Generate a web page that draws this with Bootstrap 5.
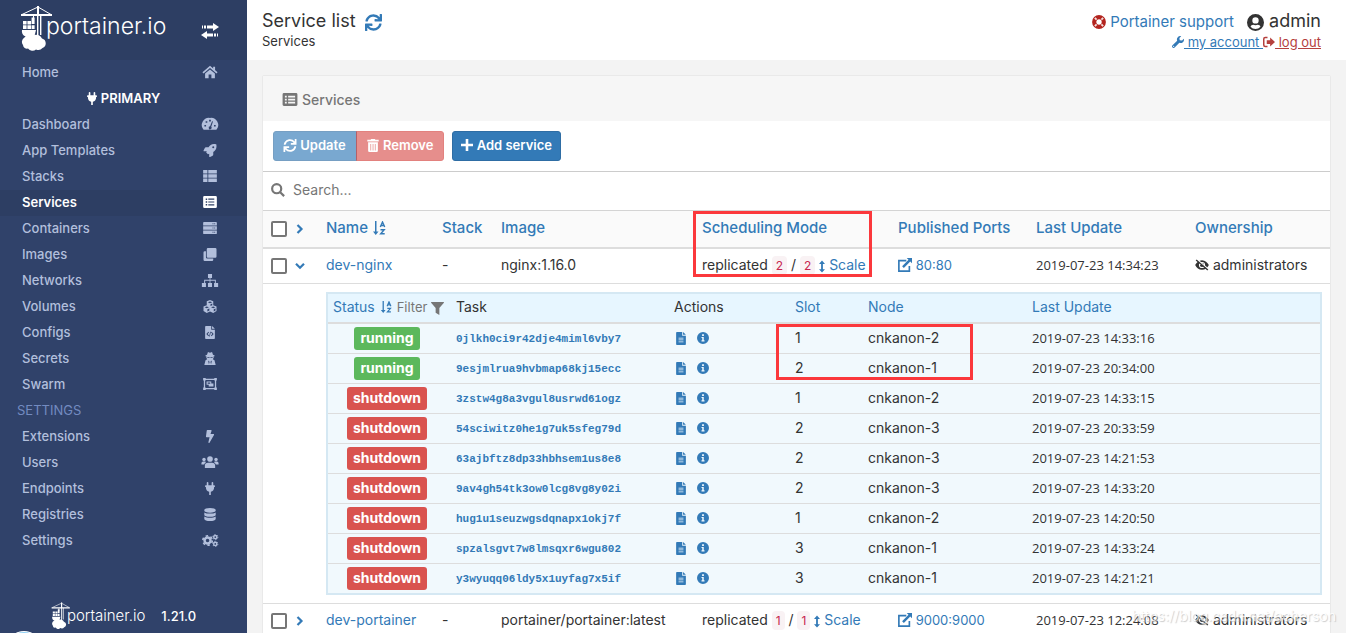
<!DOCTYPE html>
<html lang="en">
<head>
<meta charset="utf-8">
<meta name="viewport" content="width=device-width, initial-scale=1">
<title>Portainer</title>
<link href="https://cdn.jsdelivr.net/npm/bootstrap@5.3.0/dist/css/bootstrap.min.css" rel="stylesheet">
<style>
body{font-family:Inter,"Open Sans",sans-serif;font-size:13px;line-height:18px;color:#333;background:#f3f3f3}
a{color:#337ab7;text-decoration:none}
svg{fill:currentColor;flex:none}
.ico{width:14px;height:14px;vertical-align:-2px}
.ico-sm{width:12px;height:12px;vertical-align:-1px}
.sidebar{width:247px;background:#30426a;color:#b2bfdc}
.brand-bar{height:60px;background:#2d3e63;color:#fff;padding:0 28px 4px 20px}
.logo-text{font-size:23px;line-height:28px;font-weight:300;color:#fff;margin-left:-8px;padding-bottom:4px}
.swap{margin-top:5px}
.logo-sm{font-size:15px;line-height:20px;font-weight:300;color:#fff;margin-left:-4px}
.side-link{height:26px;padding:0 27px 2px 22px;color:#b2bfdc;font-weight:500}
.side-link.active{background:#2d3e63;color:#fff;font-weight:600}
.side-link svg{width:20px;height:14px}
.side-head{height:26px;padding-bottom:2px;font-weight:600;color:#fff}
.side-set{height:26px;padding:0 0 2px 17px;color:#738bc0}
.chat{position:absolute;left:5px;bottom:-36px;width:38px;height:38px;border-radius:50%;background:#8fd0f5;border:1px solid #fff}
.topbar{height:60px;background:#fff;padding:10px 25px 0 15px}
.page-title{font-size:18px;line-height:22px}
.support{font-size:15px}
.text-out{color:#b5403d}
.panel-box{margin:15px 15px 0;background:#fff;border:1px solid #e9e9e9;border-radius:2px}
.panel-head{height:45px;background:#f6f6f6;color:#767676;font-size:14px;font-weight:500;padding:2px 19px 0}
.actions{height:51px;padding:0 10px;border-bottom:1px solid #ccc}
.btn{height:30px;font-size:13px;line-height:18px;font-weight:600;padding:0 9px 2px;border-radius:3px;color:#fff}
.btn-upd{background:#337ab7;border-color:#2e6da4}
.btn-add{padding:0 8px 2px}
.btn:disabled{opacity:.65;color:#fff;background:#337ab7;border-color:#2e6da4}
.btn-group .btn{padding:0 10px 2px 9px}
.btn-del:disabled{background:#d9534f;border-color:#d43f3a}
.search{height:39px;padding:0 8px 2px;border-bottom:1px solid #d4d4d4;color:#767676}
.search input{border:0;outline:0;font-size:14px;color:#333;background:none}
.search input::placeholder{color:#767676;opacity:1}
.grid{width:100%;table-layout:fixed;border-collapse:separate;border-spacing:0;white-space:nowrap}
.grid>thead>tr>th{height:38px;padding:0 8px 2px;background:#fafafa;border-bottom:2px solid #ddd;font-size:15px;font-weight:500}
.grid>tbody>tr>td{height:35px;padding:0 8px 2px;border-bottom:1px solid #ddd;font-size:14px}
.grid>tbody>tr>.sub{padding:8px}
.grid>tbody>tr>.ports{font-size:13px}
.c1{width:55px}.c2{width:116px}.c3{width:59px}.c4{width:201px}.c5{width:196px}.c6{width:138px}.c7{width:159px}.c8{width:143px}
.tick{appearance:none;width:16px;height:16px;border:2px solid #767676;border-radius:2px;background:#fff;margin:0;vertical-align:-4px}
.chev{width:10px;height:10px;margin-left:8px;color:#337ab7;vertical-align:-1px}
.num{font-size:12px;line-height:14px;color:#c7254e;background:#f9f2f4;border-radius:4px;padding:2px 4px}
.grid .stamp{font-family:"Open Sans",sans-serif;font-size:13px}
.tasks{width:100%;table-layout:fixed;border-collapse:separate;border-spacing:0;border:2px solid #d5e8f3;background:#f1f9fd}
.tasks th{height:30px;padding:0 5px 2px;background:#e7f6ff;border-bottom:2px solid #ddd;font-size:14px;font-weight:400}
.tasks td{height:30px;padding:0 5px 2px;border-bottom:1px solid #ddd}
.tasks tr:last-child td{border-bottom:0;height:29px}
.tasks td:first-child{text-align:center;padding:0 10px 0 5px}
.d1{width:123px}.d2{width:218px}.d3{width:121px}.d4{width:73px}.d5{width:164px}.d6{width:293px}
.filter{font-size:13px;color:#767676}
.state{display:inline-block;height:23px;padding:0 6px;line-height:21px;font-size:14px;font-weight:700;color:#fff;border-radius:3px;background:#d9534f}
.state.ok{background:#5cb85c}
.tid{font-family:"Liberation Mono",monospace;font-size:11px;font-weight:700}
.frame{position:absolute;border:3px solid #fb383c;pointer-events:none}
.frame-a{left:-1px;top:0;width:179px;height:66px}
.frame-b{left:-14px;top:0;width:197px;height:56px}
.mark-url{position:absolute;right:10px;bottom:6px;font-size:14px;line-height:22px;color:#fff;text-shadow:1px 1px 1px #bbb;opacity:.75;pointer-events:none}
</style>
</head>
<body>
<svg width="0" height="0" class="position-absolute">
<symbol id="sync" viewBox="0 0 512 512"><path d="M440.65 12.57l4 82.77A247.16 247.16 0 0 0 255.83 8C134.73 8 33.91 94.92 12.29 209.82A12 12 0 0 0 24.09 224h49.05a12 12 0 0 0 11.67-9.26 175.91 175.91 0 0 1 317-56.94l-101.46-4.86a12 12 0 0 0-12.57 12v47.41a12 12 0 0 0 12 12H500a12 12 0 0 0 12-12V12a12 12 0 0 0-12-12h-47.37a12 12 0 0 0-11.98 12.57zM255.83 432a175.61 175.61 0 0 1-146-77.8l101.8 4.87a12 12 0 0 0 12.57-12v-47.4a12 12 0 0 0-12-12H12a12 12 0 0 0-12 12V500a12 12 0 0 0 12 12h47.35a12 12 0 0 0 12-12.6l-4.15-82.57A247.17 247.17 0 0 0 255.83 504c121.11 0 221.93-86.92 243.55-201.82a12 12 0 0 0-11.8-14.18h-49.05a12 12 0 0 0-11.67 9.26A175.86 175.86 0 0 1 255.83 432z"/></symbol>
<symbol id="crane" viewBox="0 0 34 46"><path d="M17 1h2v8h-2zM1 9h31v2H1zM17 10h1.400v22H17zM20 10h1.400v20H20zM13 10h1v5h-1z"/><path d="M18 2L2 9.500M18 2l13 7.500" fill="none" stroke="currentColor"/><path d="M3 16h3.600v3.500H3zM7.400 16H11v3.500H7.400zM11.600 12.500h3V19h-3zM3 20.300h3.600V24H3zM7.400 20.300H11V24H7.400zM11.600 20.300h3V24h-3z"/><path d="M2 25h14l-1.500 6H4.500C2.500 30 1.500 27.500 2 25z"/><path d="M3 40a5 5 0 0 1 1.500-7.500 5.500 5.500 0 0 1 8.500-2 6.500 6.500 0 0 1 9 3 5 5 0 0 1 .5 9.500 5.500 5.500 0 0 1-6.500 1.500 5.500 5.500 0 0 1-8-1A4 4 0 0 1 3 40z"/></symbol>
<symbol id="home" viewBox="0 0 18 16"><path d="M1 9l8-7 8 7" fill="none" stroke="currentColor" stroke-width="1.900"/><path d="M12.600 2h2.200v5l-2.200-2zM3.400 9.800L9 5l5.600 4.800V15h-4v-4.200H7.400V15h-4z"/></symbol>
<symbol id="dash" viewBox="0 0 18 16"><path fill-rule="evenodd" d="M9 1a8.200 8.200 0 0 0-7.300 13.500h14.600A8.200 8.200 0 0 0 9 1zM8 3.200h2v1.900H8zM4 4.800h1.900v1.900H4zM2.600 9h1.900v1.900H2.600zM13.600 9h1.900v1.900h-1.900zM11.400 4.800l1 .3-2 6a1.700 1.700 0 1 1-1.300-.5z"/></symbol>
<symbol id="rocket" viewBox="0 0 512 512"><path fill-rule="evenodd" d="M505 19c-1-5-7-11-12-12C461 0 435 0 410 0 307 0 245 55 199 128H95c-18 0-35 10-43 26L3 253c-8 16 3 35 21 35h104l-22 50 70 70 48-22v102c0 18 19 29 35 21l98-49c17-8 27-25 27-43V313c73-46 128-108 128-211 0-25 0-50-7-83zM384 168a40 40 0 1 1 0-80 40 40 0 0 1 0 80z"/></symbol>
<symbol id="thlist" viewBox="0 0 16 14"><path d="M0 0h5v4H0zM6 0h10v4H6zM0 5h5v4H0zM6 5h10v4H6zM0 10h5v4H0zM6 10h10v4H6z"/></symbol>
<symbol id="listalt" viewBox="0 0 16 14"><path fill-rule="evenodd" d="M1.500 0h13A1.500 1.500 0 0 1 16 1.500v11a1.500 1.500 0 0 1-1.500 1.500h-13A1.500 1.500 0 0 1 0 12.500v-11A1.500 1.500 0 0 1 1.500 0zM3 3v1.600h1.700V3zM6 3v1.400h7V3zM3 6.200v1.600h1.700V6.200zM6 6.300v1.400h7V6.300zM3 9.400V11h1.700V9.400zM6 9.600V11h7V9.600z"/></symbol>
<symbol id="table" viewBox="0 0 16 14"><path fill-rule="evenodd" d="M1.500 0h13A1.500 1.500 0 0 1 16 1.500v11a1.500 1.500 0 0 1-1.500 1.500h-13A1.500 1.500 0 0 1 0 12.500v-11A1.500 1.500 0 0 1 1.500 0zM2.500 3v1.800h2V3zM6 3v1.800h7.500V3zM2.500 6.200V8h2V6.200zM6 6.200V8h7.500V6.200zM2.500 9.400v1.800h2V9.400zM6 9.400v1.800h7.500V9.400z"/></symbol>
<symbol id="server" viewBox="0 0 16 14"><path fill-rule="evenodd" d="M1 0h14a1 1 0 0 1 1 1v3H0V1a1 1 0 0 1 1-1zM11 1.500v1h1v-1zM13 1.500v1h1v-1zM0 5h16v4H0zM11 6.500v1h1v-1zM13 6.500v1h1v-1zM0 10h16v3a1 1 0 0 1-1 1H1a1 1 0 0 1-1-1zM11 11.500v1h1v-1zM13 11.500v1h1v-1z"/></symbol>
<symbol id="clone" viewBox="0 0 16 16"><path d="M5.500 0h9A1.500 1.500 0 0 1 16 1.500v9a1.500 1.500 0 0 1-1.500 1.500h-9A1.500 1.500 0 0 1 4 10.500v-9A1.500 1.500 0 0 1 5.500 0zM3 4v7.500A1.500 1.500 0 0 0 4.500 13H12v1.500a1.500 1.500 0 0 1-1.500 1.500h-9A1.500 1.500 0 0 1 0 14.500v-9A1.500 1.500 0 0 1 1.500 4z"/></symbol>
<symbol id="sitemap" viewBox="0 0 20 16"><path d="M7.500 0h5v5h-2v2h6.700v4H20v5h-5v-5h1V8.300h-5.500V11h2v5h-5v-5h2V8.300H4V11h1v5H0v-5h2.800V7h6.700V5h-2z"/></symbol>
<symbol id="cubes" viewBox="0 0 18 16"><path fill-rule="evenodd" d="M9 0l4 1.600v4.800L17 8v5.500L13 16l-4-1.800L5 16l-4-2.500V8l4-1.600V1.600zM6.300 2.800L9 4l2.700-1.200L9 1.700zM2.400 9l2.600 1.200L7.700 9 5 7.900zM10.300 9l2.700 1.200L15.600 9 13 7.900zM5.800 11.500v2.600l2.400-1.300v-2.400zM13.600 11.500v2.600l2.200-1.300v-2.400zM9.600 5.200v2.200l2.200-.9V4.200z"/></symbol>
<symbol id="filecode" viewBox="0 0 12 16"><path fill-rule="evenodd" d="M1 0h6.500v4.500H12V15a1 1 0 0 1-1 1H1a1 1 0 0 1-1-1V1a1 1 0 0 1 1-1zM8.500 0L12 3.500H8.500zM4 7L1.500 9.800 4 12.500l.8-.8L3.100 9.800l1.700-2zM8 7l-.8.8 1.700 2-1.700 1.900.8.800 2.500-2.700zM6.200 7l-1.300 6h.9l1.300-6z"/></symbol>
<symbol id="secret" viewBox="0 0 14 16"><path fill-rule="evenodd" d="M4.500 0L7 .8 9.500 0l1.200 3.500 2 .8v1H11.500v1.800L10.500 9l2 1.200L14 16H0l1.500-5.800 2-1.200-1-1.900V5.300H1.300v-1l2-.8zM3.700 6v1h2.800V6zM7.500 6v1h2.800V6zM4.600 10.500L5.700 15l.8-3zM9.400 10.500L7.500 12l.8 3z"/></symbol>
<symbol id="group" viewBox="0 0 16 14"><path fill-rule="evenodd" d="M0 0h3v.8h10V0h3v3h-.8v8h.8v3h-3v-.8H3v.8H0v-3h.8V3H0zM3 2.300v.7h-.7v8H3v.7h10V11h.7V3H13v-.7zM4 4h5.500v2.300H12V10H6.500V8H4zM5.300 5.200v1.600h3V5.200z"/></symbol>
<symbol id="bolt" viewBox="0 0 320 512"><path d="M296 160H180.600l42.600-129.800C227.200 15 215.700 0 200 0H56C44 0 33.800 8.900 32.200 20.800l-32 240C-1.700 275.200 9.500 288 24 288h118.700L96.600 482.500c-3.600 15.200 8 29.500 23.300 29.500 8.400 0 16.400-4.400 20.800-12l176-304c9.300-15.900-2.200-36-20.700-36z"/></symbol>
<symbol id="users" viewBox="0 0 20 14"><circle cx="10" cy="3.500" r="3.300"/><circle cx="3" cy="4" r="2"/><circle cx="17" cy="4" r="2"/><path d="M4 14v-2.500A3.700 3.700 0 0 1 7.700 7.800h4.600a3.700 3.700 0 0 1 3.700 3.700V14zM0 10V8.500a2 2 0 0 1 2-2h2.500l.8.700A5 5 0 0 0 3.200 10zM20 10V8.500a2 2 0 0 0-2-2h-2.500l-.8.700a5 5 0 0 1 2.100 2.800z"/></symbol>
<symbol id="plug" viewBox="0 0 12 16"><path d="M2 1a1 1 0 0 1 2 0v3h4V1a1 1 0 0 1 2 0v3h1.500a.5.5 0 0 1 .5.500V6h-1v1.500A5 5 0 0 1 7 12v4H5v-4a5 5 0 0 1-4-4.500V6H0V4.500A.5.5 0 0 1 .5 4H2z"/></symbol>
<symbol id="db" viewBox="0 0 14 16"><path d="M0 2.300C0 1 3 0 7 0s7 1 7 2.300v1.200C14 4.800 11 5.700 7 5.700S0 4.800 0 3.500zM0 5.500c1.500 1.100 4 1.400 7 1.400s5.500-.3 7-1.400v3c0 1.300-3 2.300-7 2.300S0 9.800 0 8.500zM0 10.500c1.500 1.200 4 1.500 7 1.500s5.500-.3 7-1.500v3c0 1.500-3 2.500-7 2.500S0 15 0 13.500z"/></symbol>
<symbol id="cogs" viewBox="0 0 20 16"><g fill="none" stroke="currentColor"><circle cx="7" cy="8" r="3.700" stroke-width="3"/><circle cx="7" cy="8" r="5.800" stroke-width="2" stroke-dasharray="3 3.070"/><circle cx="16.500" cy="3.800" r="2" stroke-width="1.800"/><circle cx="16.500" cy="12.200" r="2" stroke-width="1.800"/><circle cx="16.500" cy="3.800" r="3.200" stroke-dasharray="1.700 1.650"/><circle cx="16.500" cy="12.200" r="3.200" stroke-dasharray="1.700 1.650"/></g></symbol>
<symbol id="swap" viewBox="0 0 18 16"><path d="M1 2.500h1v3H1zM3 2.500h2v3H3zM6 2.500h6V0l6 4-6 4V5.500H6zM17 10.500h-1v3h1zM15 10.500h-2v3h2zM12 10.500H6V8l-6 4 6 4v-2.500h6z"/></symbol>
<symbol id="ring" viewBox="0 0 16 16"><circle cx="8" cy="8" r="5.500" fill="none" stroke="#b3241e" stroke-width="4.800"/><path d="M2.500 4l1.500-1.500 2 2L4.500 6zM13.500 4L12 2.500l-2 2L11.500 6zM2.500 12L4 13.500l2-2L4.500 10zM13.500 12L12 13.500l-2-2 1.500-1.500z" fill="#f3dedd"/></symbol>
<symbol id="usr" viewBox="0 0 16 16"><path fill-rule="evenodd" d="M8 0a8 8 0 1 1 0 16A8 8 0 0 1 8 0zM8 3a3 3 0 1 0 0 6 3 3 0 0 0 0-6zM3.300 12a6.100 6.100 0 0 0 9.400 0 2.600 2.600 0 0 0-2.500-1.900c-1.300.6-3.100.6-4.400 0A2.600 2.600 0 0 0 3.300 12z"/></symbol>
<symbol id="wrench" viewBox="0 0 16 16"><path fill-rule="evenodd" d="M15.800 3.700a4.500 4.500 0 0 1-6 5.400l-6.200 6.200a2 2 0 0 1-2.900-2.900l6.200-6.200A4.500 4.500 0 0 1 12.300.2L9.900 2.600l.4 3.100 3.100.4zM2.200 13a.8.8 0 1 0 0 1.600.8.8 0 0 0 0-1.600z"/></symbol>
<symbol id="out" viewBox="0 0 16 14"><path d="M6 0v2H3a1 1 0 0 0-1 1v8a1 1 0 0 0 1 1h3v2H3a3 3 0 0 1-3-3V3a3 3 0 0 1 3-3zM5 4.500h4.500V1L16 7l-6.500 6V9.500H5z"/></symbol>
<symbol id="trash" viewBox="0 0 14 16"><path fill-rule="evenodd" d="M0 1h4l.7-1h4.600l.7 1h4v2H0zM1 4h12v10.500a1.500 1.500 0 0 1-1.500 1.500h-9A1.500 1.500 0 0 1 1 14.500zM3.800 6v8h.9V6zM6.600 6v8h.9V6zM9.300 6v8h.9V6z"/></symbol>
<symbol id="plus" viewBox="0 0 12 12"><path d="M4.700 0h2.600v4.700H12v2.600H7.300V12H4.700V7.300H0V4.700h4.700z"/></symbol>
<symbol id="glass" viewBox="0 0 16 16"><path d="M6.500 1.300a5.200 5.200 0 1 0 0 10.400 5.200 5.200 0 0 0 0-10.400zM10.500 10.500l4.500 4.500" fill="none" stroke="currentColor" stroke-width="2.500"/></symbol>
<symbol id="right" viewBox="0 0 10 10"><path d="M2.500 1l4 4-4 4" fill="none" stroke="currentColor" stroke-width="2.200"/></symbol>
<symbol id="down" viewBox="0 0 10 10"><path d="M1 2.800l4 4 4-4" fill="none" stroke="currentColor" stroke-width="2.200"/></symbol>
<symbol id="sort" viewBox="0 0 14 14"><path d="M3 0h1.500v10.500h2L3.750 14 1 10.500h2z"/><path d="M8.300 6l2.200-5 2.200 5M9 4.500h3M8.500 8.700h3.700l-3.500 4h4" fill="none" stroke="currentColor" stroke-width="1.400"/></symbol>
<symbol id="funnel" viewBox="0 0 14 14"><path d="M.5 0h13a.5.5 0 0 1 .4.800L9 6.500V14l-4-2.500v-5L.1.800A.5.5 0 0 1 .5 0z"/></symbol>
<symbol id="updown" viewBox="0 0 8 16"><path d="M4 0l4 4.500H5.200v7H8L4 16l-4-4.500h2.800v-7H0z"/></symbol>
<symbol id="ext" viewBox="0 0 16 16"><path d="M9.500 3H1v12h12V9" fill="none" stroke="currentColor" stroke-width="1.900"/><path d="M10 0h6v6l-2-2-7.300 7.300-2-2L12 2z"/></symbol>
<symbol id="eye" viewBox="0 0 18 14"><path fill-rule="evenodd" d="M9 .8c4 0 7 3 8.800 6.200C16 10.500 13 13.200 9 13.200S2 10.500.2 7C2 3.800 5 .8 9 .8zM9 3a4 4 0 1 0 0 8 4 4 0 0 0 0-8zM9 4.300a2.700 2.700 0 1 1-2.700 2.700L9 7z"/><path d="M3 .5L16.500 12" stroke="#fff" stroke-width="2"/><path d="M1.500.5l15 13" stroke="currentColor" stroke-width="1.800"/></symbol>
<symbol id="file" viewBox="0 0 12 16"><path fill-rule="evenodd" d="M1 0h6.500v4.500H12V15a1 1 0 0 1-1 1H1a1 1 0 0 1-1-1V1a1 1 0 0 1 1-1zM8.500 0L12 3.500H8.500zM3 7v1h6V7zM3 9.300v1h6v-1zM3 11.600v1h6v-1z"/></symbol>
<symbol id="info" viewBox="0 0 16 16"><path fill-rule="evenodd" d="M8 0a8 8 0 1 1 0 16A8 8 0 0 1 8 0zM6.800 3v2.200h2.400V3zM6 6.500V8h1v3H6v1.500h4V11H9V6.500z"/></symbol>
</svg>

<div class="d-flex vh-100 overflow-hidden position-relative">
<nav class="sidebar d-flex flex-column flex-shrink-0 position-relative overflow-hidden">
  <div class="brand-bar d-flex align-items-center">
    <svg width="34" height="46"><use href="#crane"/></svg><span class="logo-text">portainer.io</span>
    <svg class="swap ms-auto" width="18" height="16"><use href="#swap"/></svg>
  </div>
  <a href="#" class="side-link d-flex align-items-center justify-content-between">Home<svg><use href="#home"/></svg></a>
  <div class="side-head d-flex align-items-center justify-content-center gap-1"><svg width="10" height="13"><use href="#plug"/></svg>PRIMARY</div>
  <a href="#" class="side-link d-flex align-items-center justify-content-between">Dashboard<svg><use href="#dash"/></svg></a>
  <a href="#" class="side-link d-flex align-items-center justify-content-between">App Templates<svg><use href="#rocket" y="1" height="13"/></svg></a>
  <a href="#" class="side-link d-flex align-items-center justify-content-between">Stacks<svg><use href="#thlist" y="1" height="12"/></svg></a>
  <a href="#" class="side-link active d-flex align-items-center justify-content-between">Services<svg><use href="#listalt" y="1" height="12"/></svg></a>
  <a href="#" class="side-link d-flex align-items-center justify-content-between">Containers<svg><use href="#server" y="1" height="12"/></svg></a>
  <a href="#" class="side-link d-flex align-items-center justify-content-between">Images<svg><use href="#clone" y="1" height="13"/></svg></a>
  <a href="#" class="side-link d-flex align-items-center justify-content-between">Networks<svg><use href="#sitemap" y="1" height="13"/></svg></a>
  <a href="#" class="side-link d-flex align-items-center justify-content-between">Volumes<svg><use href="#cubes" y="1" height="13"/></svg></a>
  <a href="#" class="side-link d-flex align-items-center justify-content-between">Configs<svg><use href="#filecode" y="1" height="13"/></svg></a>
  <a href="#" class="side-link d-flex align-items-center justify-content-between">Secrets<svg><use href="#secret" y="1" height="13"/></svg></a>
  <a href="#" class="side-link d-flex align-items-center justify-content-between">Swarm<svg><use href="#group" y="1" height="12"/></svg></a>
  <div class="side-set d-flex align-items-center">SETTINGS</div>
  <a href="#" class="side-link d-flex align-items-center justify-content-between">Extensions<svg><use href="#bolt" y="1" height="13"/></svg></a>
  <a href="#" class="side-link d-flex align-items-center justify-content-between">Users<svg><use href="#users" y="1" height="12"/></svg></a>
  <a href="#" class="side-link d-flex align-items-center justify-content-between">Endpoints<svg><use href="#plug" y="1" height="13"/></svg></a>
  <a href="#" class="side-link d-flex align-items-center justify-content-between">Registries<svg><use href="#db" y="1" height="13"/></svg></a>
  <a href="#" class="side-link d-flex align-items-center justify-content-between">Settings<svg><use href="#cogs" y="1" height="13"/></svg></a>
  <div class="mt-auto d-flex align-items-center justify-content-center pb-1 text-white">
    <svg width="20" height="27"><use href="#crane"/></svg><span class="logo-sm">portainer.io</span><span class="ms-3 fw-medium">1.21.0</span>
  </div>
  <div class="chat"></div>
</nav>

<main class="flex-grow-1 overflow-hidden">
  <header class="topbar d-flex justify-content-between">
    <div>
      <div class="page-title">Service list <a href="#" aria-label="Refresh"><svg width="17" height="17" class="ms-1"><use href="#sync"/></svg></a></div>
      <div>Services</div>
    </div>
    <div class="text-end">
      <div class="page-title"><a href="#" class="support"><svg class="ico me-1"><use href="#ring"/></svg>Portainer support</a> <span class="ms-2"><svg width="17" height="17"><use href="#usr"/></svg> admin</span></div>
      <div><a href="#"><svg class="ico-sm"><use href="#wrench"/></svg><u> my account </u></a> <a href="#" class="text-out"><svg class="ico-sm"><use href="#out"/></svg><u> log out</u></a></div>
    </div>
  </header>

  <section class="panel-box">
    <div class="panel-head d-flex align-items-center gap-1"><svg width="16" height="13"><use href="#table"/></svg>Services</div>
    <div class="actions d-flex align-items-center gap-2">
      <div class="btn-group">
        <button type="button" class="btn btn-upd" disabled><svg class="ico"><use href="#sync" y="1" height="13"/></svg> Update</button>
        <button type="button" class="btn btn-del" disabled><svg class="ico"><use href="#trash" y="1" height="13"/></svg> Remove</button>
      </div>
      <button type="button" class="btn btn-upd btn-add"><svg class="ico-sm"><use href="#plus"/></svg> Add service</button>
    </div>
    <label class="search d-flex align-items-center gap-2"><svg width="14" height="14"><use href="#glass"/></svg><input type="text" class="flex-grow-1 p-0" placeholder="Search..." aria-label="Search"></label>
    <table class="grid">
      <colgroup><col class="c1"><col class="c2"><col class="c3"><col class="c4"><col class="c5"><col class="c6"><col class="c7"><col class="c8"></colgroup>
      <thead><tr>
        <th><input type="checkbox" class="tick" aria-label="Select all"><svg class="chev"><use href="#right"/></svg></th>
        <th><a href="#">Name <svg class="ico"><use href="#sort"/></svg></a></th><th><a href="#">Stack</a></th><th><a href="#">Image</a></th>
        <th class="position-relative"><a href="#">Scheduling Mode</a><span class="frame frame-a"></span></th>
        <th><a href="#">Published Ports</a></th><th><a href="#">Last Update</a></th><th><a href="#">Ownership</a></th>
      </tr></thead>
      <tbody>
      <tr>
        <td><input type="checkbox" class="tick" aria-label="Select dev-nginx"><svg class="chev"><use href="#down"/></svg></td>
        <td><a href="#">dev-nginx</a></td><td>-</td><td>nginx:1.16.0</td>
        <td>replicated <span class="num">2</span> / <span class="num">2</span> <a href="#"><svg width="6" height="13"><use href="#updown"/></svg> Scale</a></td>
        <td class="ports"><a href="#"><svg class="ico"><use href="#ext"/></svg> 80:80</a></td><td class="stamp">2019-07-23 14:34:23</td><td><svg class="ico"><use href="#eye"/></svg> administrators</td>
      </tr>
      <tr><td></td><td colspan="7" class="sub">
        <table class="tasks">
          <colgroup><col class="d1"><col class="d2"><col class="d3"><col class="d4"><col class="d5"><col class="d6"></colgroup>
          <thead><tr><th><a href="#">Status<svg class="ico ms-1"><use href="#sort" height="12" y="1"/></svg></a> <span class="filter">Filter <svg width="13" height="13"><use href="#funnel"/></svg></span></th><th>Task</th><th>Actions</th><th><a href="#">Slot</a></th><th><a href="#">Node</a></th><th><a href="#">Last Update</a></th></tr></thead>
          <tbody>
          <tr><td><span class="state ok">running</span></td><td><a href="#" class="tid">0jlkh0ci9r42dje4miml6vby7</a></td><td><a href="#" aria-label="Logs"><svg class="ico"><use href="#file" y="1" height="13"/></svg></a> <a href="#" class="ms-1" aria-label="Details"><svg class="ico"><use href="#info" y="1" height="12"/></svg></a></td><td class="position-relative">1<span class="frame frame-b"></span></td><td>cnkanon-2</td><td class="stamp">2019-07-23 14:33:16</td></tr>
          <tr><td><span class="state ok">running</span></td><td><a href="#" class="tid">9esjmlrua9hvbmap68kj15ecc</a></td><td><a href="#" aria-label="Logs"><svg class="ico"><use href="#file" y="1" height="13"/></svg></a> <a href="#" class="ms-1" aria-label="Details"><svg class="ico"><use href="#info" y="1" height="12"/></svg></a></td><td>2</td><td>cnkanon-1</td><td class="stamp">2019-07-23 20:34:00</td></tr>
          <tr><td><span class="state">shutdown</span></td><td><a href="#" class="tid">3zstw4g8a3vgul8usrwd61ogz</a></td><td><a href="#" aria-label="Logs"><svg class="ico"><use href="#file" y="1" height="13"/></svg></a> <a href="#" class="ms-1" aria-label="Details"><svg class="ico"><use href="#info" y="1" height="12"/></svg></a></td><td>1</td><td>cnkanon-2</td><td class="stamp">2019-07-23 14:33:15</td></tr>
          <tr><td><span class="state">shutdown</span></td><td><a href="#" class="tid">54sciwitz0he1g7uk5sfeg79d</a></td><td><a href="#" aria-label="Logs"><svg class="ico"><use href="#file" y="1" height="13"/></svg></a> <a href="#" class="ms-1" aria-label="Details"><svg class="ico"><use href="#info" y="1" height="12"/></svg></a></td><td>2</td><td>cnkanon-3</td><td class="stamp">2019-07-23 20:33:59</td></tr>
          <tr><td><span class="state">shutdown</span></td><td><a href="#" class="tid">63ajbftz8dp33hbhsem1us8e8</a></td><td><a href="#" aria-label="Logs"><svg class="ico"><use href="#file" y="1" height="13"/></svg></a> <a href="#" class="ms-1" aria-label="Details"><svg class="ico"><use href="#info" y="1" height="12"/></svg></a></td><td>2</td><td>cnkanon-3</td><td class="stamp">2019-07-23 14:21:53</td></tr>
          <tr><td><span class="state">shutdown</span></td><td><a href="#" class="tid">9av4gh54tk3ow0lcg8vg8y02i</a></td><td><a href="#" aria-label="Logs"><svg class="ico"><use href="#file" y="1" height="13"/></svg></a> <a href="#" class="ms-1" aria-label="Details"><svg class="ico"><use href="#info" y="1" height="12"/></svg></a></td><td>2</td><td>cnkanon-3</td><td class="stamp">2019-07-23 14:33:20</td></tr>
          <tr><td><span class="state">shutdown</span></td><td><a href="#" class="tid">hug1u1seuzwgsdqnapx1okj7f</a></td><td><a href="#" aria-label="Logs"><svg class="ico"><use href="#file" y="1" height="13"/></svg></a> <a href="#" class="ms-1" aria-label="Details"><svg class="ico"><use href="#info" y="1" height="12"/></svg></a></td><td>1</td><td>cnkanon-2</td><td class="stamp">2019-07-23 14:20:50</td></tr>
          <tr><td><span class="state">shutdown</span></td><td><a href="#" class="tid">spzalsgvt7w8lmsqxr6wgu802</a></td><td><a href="#" aria-label="Logs"><svg class="ico"><use href="#file" y="1" height="13"/></svg></a> <a href="#" class="ms-1" aria-label="Details"><svg class="ico"><use href="#info" y="1" height="12"/></svg></a></td><td>3</td><td>cnkanon-1</td><td class="stamp">2019-07-23 14:33:24</td></tr>
          <tr><td><span class="state">shutdown</span></td><td><a href="#" class="tid">y3wyuqq06ldy5x1uyfag7x5if</a></td><td><a href="#" aria-label="Logs"><svg class="ico"><use href="#file" y="1" height="13"/></svg></a> <a href="#" class="ms-1" aria-label="Details"><svg class="ico"><use href="#info" y="1" height="12"/></svg></a></td><td>3</td><td>cnkanon-1</td><td class="stamp">2019-07-23 14:21:21</td></tr>
          </tbody>
        </table>
      </td></tr>
      <tr>
        <td><input type="checkbox" class="tick" aria-label="Select dev-portainer"><svg class="chev"><use href="#right"/></svg></td>
        <td><a href="#">dev-portainer</a></td><td>-</td><td>portainer/portainer:latest</td>
        <td>replicated <span class="num">1</span> / <span class="num">1</span> <a href="#"><svg width="6" height="13"><use href="#updown"/></svg> Scale</a></td>
        <td class="ports"><a href="#"><svg class="ico"><use href="#ext"/></svg> 9000:9000</a></td><td class="stamp">2019-07-23 12:24:08</td><td><svg class="ico"><use href="#eye"/></svg> administrators</td>
      </tr>
      </tbody>
    </table>
  </section>
</main>
<div class="mark-url">https://blog.csdn.net/acherson</div>
</div>
<script src="https://cdn.jsdelivr.net/npm/bootstrap@5.3.0/dist/js/bootstrap.bundle.min.js"></script>
</body>
</html>
